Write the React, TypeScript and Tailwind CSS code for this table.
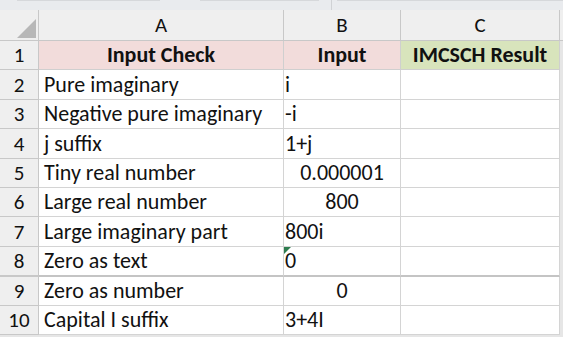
import React from 'react';

const FONT = { fontFamily: 'Carlito, Calibri, Lato, "Liberation Sans", sans-serif' };

type Row = { a: string; b: string; num?: boolean; flag?: boolean; h: string; thick?: boolean };

const ROWS: Row[] = [
  { a: 'Pure imaginary', b: 'i', h: 'h-[30px]' },
  { a: 'Negative pure imaginary', b: '-i', h: 'h-[29px]' },
  { a: 'j suffix', b: '1+j', h: 'h-[30px]' },
  { a: 'Tiny real number', b: '0.000001', num: true, h: 'h-[29px]' },
  { a: 'Large real number', b: '800', num: true, h: 'h-[29px]' },
  { a: 'Large imaginary part', b: '800i', h: 'h-[30px]' },
  { a: 'Zero as text', b: '0', flag: true, h: 'h-[30px]', thick: true },
  { a: 'Zero as number', b: '0', num: true, h: 'h-[29px]' },
  { a: 'Capital I suffix', b: '3+4I', h: 'h-[29px]' },
];

export default function App() {
  return (
    <div className="w-[563px] h-[337px] overflow-hidden bg-[#e6e6e6] text-[#111]" style={FONT}>
      {/* formula bar edge */}
      <div className="h-[10px] bg-[#e9ebee] flex">
        <div className="ml-[17px] w-[143px] h-px bg-[#d6d8db]" />
        <div className="ml-[40px] w-[119px] h-px bg-[#d6d8db]" />
        <div className="ml-[12px] w-px h-full bg-[#d0d2d5]" />
        <div className="ml-[5px] flex-1 h-px bg-[#d6d8db]" />
      </div>

      {/* column headers */}
      <div className="flex h-[31px] bg-[#efefef] border-b border-[#c8c8c8] text-[21px] leading-[21px]">
        <div className="w-[39px] border-r border-[#c8c8c8] flex items-end justify-end pr-[1px] pb-[1px]">
          <svg width="21" height="21" viewBox="0 0 21 21">
            <polygon points="20,1 20,20 1,20" fill="#b7b7b7" />
          </svg>
        </div>
        <div className="w-[245px] border-r border-[#c8c8c8] flex items-end justify-center pb-[4px]">A</div>
        <div className="w-[117px] border-r border-[#c8c8c8] flex items-end justify-center pb-[4px]">B</div>
        <div className="w-[159px] border-r border-[#c8c8c8] flex items-end justify-center pb-[4px]">C</div>
      </div>

      {/* row 1 */}
      <div className="flex h-[29px] text-[22px] leading-[22px]">
        <div className="w-[39px] bg-[#efefef] border-r border-b border-[#c8c8c8] flex items-end justify-center pb-[3px] text-[21px]">1</div>
        <div className="w-[245px] bg-[#f2dcdb] border-r border-b border-[#cfcfcf] flex items-end justify-center pb-[3px] font-bold">Input Check</div>
        <div className="w-[117px] bg-[#f2dcdb] border-r border-b border-[#cfcfcf] flex items-end justify-center pb-[3px] font-bold">Input</div>
        <div className="w-[159px] bg-[#d8e4bc] border-r border-b border-[#cfcfcf] flex items-end justify-center pb-[3px] font-bold">IMCSCH Result</div>
      </div>

      {ROWS.map((r, i) => (
        <div key={i} className={`flex ${r.h} text-[22px] leading-[22px]`}>
          <div
            className={`w-[39px] bg-[#efefef] border-r border-[#c8c8c8] flex items-end justify-center pb-[3px] text-[21px] ${
              r.thick ? 'border-b-2' : 'border-b'
            }`}
          >
            {i + 2}
          </div>
          <div
            className={`w-[245px] bg-white border-r border-[#d4d4d4] flex items-end pl-[5px] pb-[3px] ${
              r.thick ? 'border-b-2 border-b-[#c4c4c4]' : 'border-b'
            }`}
          >
            {r.a}
          </div>
          <div
            className={`relative w-[117px] bg-white border-r border-[#d4d4d4] flex items-end pb-[3px] ${
              r.num ? 'justify-center' : 'pl-[1px]'
            } ${r.thick ? 'border-b-2 border-b-[#c4c4c4]' : 'border-b'}`}
          >
            {r.flag && (
              <svg className="absolute left-0 top-0" width="7" height="7" viewBox="0 0 7 7">
                <polygon points="0,0 7,0 0,7" fill="#2e7d4f" />
              </svg>
            )}
            {r.b}
          </div>
          <div
            className={`w-[159px] bg-white border-r border-[#d4d4d4] ${
              r.thick ? 'border-b-2 border-b-[#c4c4c4]' : 'border-b'
            }`}
          />
        </div>
      ))}
    </div>
  );
}
